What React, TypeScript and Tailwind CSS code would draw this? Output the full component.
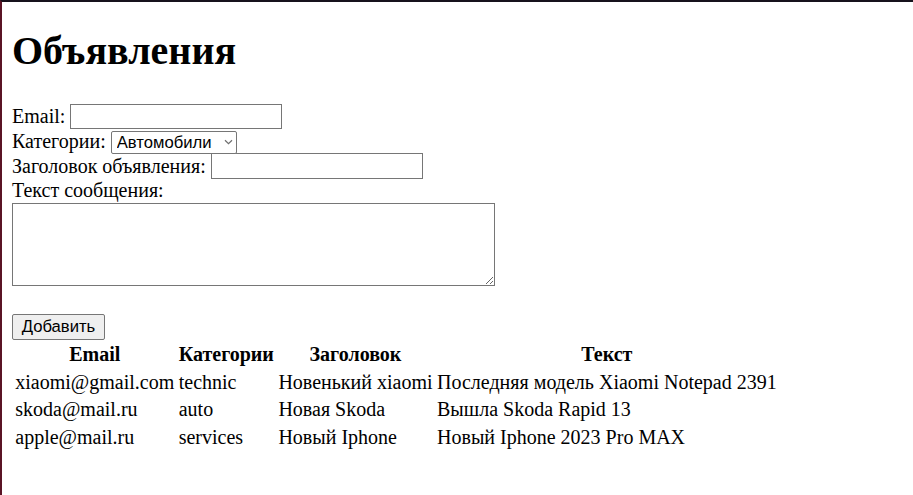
import React from "react";

const rows = [
  ["xiaomi@gmail.com", "technic", "Новенький xiaomi", "Последняя модель Xiaomi Notepad 2391"],
  ["skoda@mail.ru", "auto", "Новая Skoda", "Вышла Skoda Rapid 13"],
  ["apple@mail.ru", "services", "Новый Iphone", "Новый Iphone 2023 Pro MAX"],
];

export default function App() {
  return (
    <div
      className="h-[495px] w-[913px] overflow-hidden border-t-2 border-l-2 border-t-[#16121c] border-l-[#5a1425] bg-white pl-[10px] text-black"
      style={{ fontFamily: '"Liberation Serif", "Times New Roman", serif' }}
    >
      <h1 className="mt-[27px] text-[40px] font-bold leading-[44px]">Объявления</h1>

      <form className="mt-[30px] text-[20px] leading-[23px]" onSubmit={(e) => e.preventDefault()}>
        <div className="flex h-[26px] items-center gap-[5px]">
          <label>Email:</label>
          <input
            type="text"
            className="h-[25px] w-[212px] border border-[#767676] bg-white px-[2px] text-[16.67px] outline-none"
            style={{ fontFamily: '"Liberation Sans", Arial, sans-serif' }}
          />
        </div>
        <div className="flex h-[24px] items-center gap-[5px]">
          <label>Категории:</label>
          <div className="relative h-[23px] w-[126px]">
            <select
              className="h-[23px] w-[126px] appearance-none rounded-[2px] border border-[#767676] bg-white pl-[5px] text-[16.67px] leading-[20px] outline-none"
              style={{ fontFamily: '"Liberation Sans", Arial, sans-serif' }}
              defaultValue="auto"
            >
              <option value="auto">Автомобили</option>
              <option value="technic">Техника</option>
              <option value="services">Услуги</option>
            </select>
            <svg
              className="pointer-events-none absolute right-[4px] top-[9px]"
              width="9"
              height="6"
              viewBox="0 0 9 6"
              fill="none"
            >
              <path d="M1 1.2 L4.5 4.6 L8 1.2" stroke="#6f6f6f" strokeWidth="1.2" />
            </svg>
          </div>
        </div>
        <div className="flex h-[26px] items-center gap-[5px]">
          <label>Заголовок объявления:</label>
          <input
            type="text"
            className="h-[26px] w-[212px] border border-[#767676] bg-white px-[2px] text-[16.67px] outline-none"
            style={{ fontFamily: '"Liberation Sans", Arial, sans-serif' }}
          />
        </div>
        <div className="h-[23px]">Текст сообщения:</div>
        <textarea
          className="mt-[1px] block h-[83px] w-[483px] border border-[#767676] bg-white text-[16.67px] outline-none"
          style={{ fontFamily: '"Liberation Mono", monospace' }}
        />
        <button
          type="submit"
          className="mt-[28px] block h-[26px] w-[93px] rounded-[2px] border border-[#767676] bg-[#efefef] text-[16.67px] leading-[20px] text-black"
          style={{ fontFamily: '"Liberation Sans", Arial, sans-serif' }}
        >
          Добавить
        </button>
      </form>

      <table className="border-separate border-spacing-[2.5px] text-[20px] leading-[23.5px]">
        <thead>
          <tr>
            <th className="px-[1.25px] py-[1px] text-center font-bold">Email</th>
            <th className="px-[1.25px] py-[1px] text-center font-bold">Категории</th>
            <th className="px-[1.25px] py-[1px] text-center font-bold">Заголовок</th>
            <th className="px-[1.25px] py-[1px] text-center font-bold">Текст</th>
          </tr>
        </thead>
        <tbody>
          {rows.map((r) => (
            <tr key={r[0]}>
              {r.map((c, i) => (
                <td key={i} className="px-[1.25px] py-[1px] whitespace-nowrap">
                  {c}
                </td>
              ))}
            </tr>
          ))}
        </tbody>
      </table>
    </div>
  );
}
